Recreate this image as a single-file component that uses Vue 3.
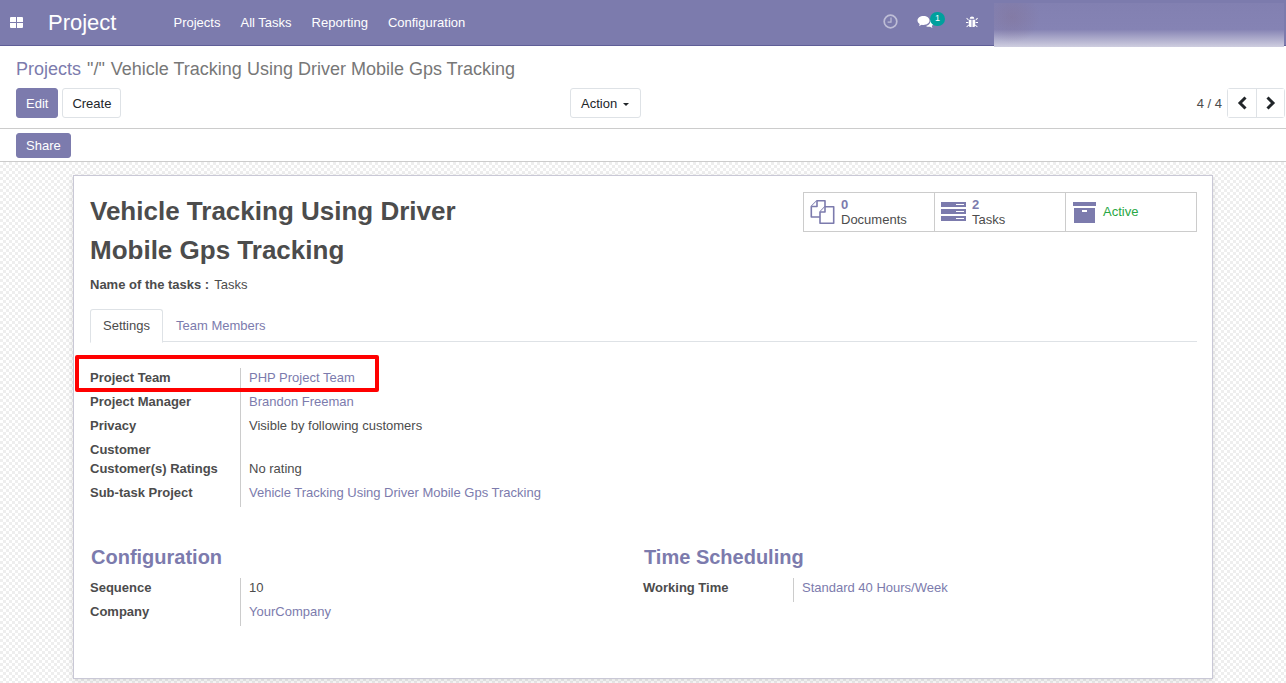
<template>
  <div class="page">
    <header class="navbar">
      <svg class="apps" width="13" height="11" viewBox="0 0 13 11"><path fill="#fff" d="M1 0h5v5H0V1a1 1 0 0 1 1-1zM7 0h5a1 1 0 0 1 1 1v4H7zM0 6h6v5H1a1 1 0 0 1-1-1zM7 6h6v4a1 1 0 0 1-1 1H7z"/></svg>
      <span class="brand">Project</span>
      <nav class="menu">
        <a v-for="item in menu" :key="item">{{ item }}</a>
      </nav>
      <div class="systray">
        <svg class="clock" width="15" height="15" viewBox="0 0 15 15"><circle cx="7.5" cy="7.5" r="6.3" fill="none" stroke="#fff" stroke-width="1.7"/><path d="M8 3.5v4.6H4.6" fill="none" stroke="#fff" stroke-width="1.2"/></svg>
        <span class="chat">
          <svg width="17" height="14" viewBox="0 0 17 14"><path fill="#fff" d="M6.5 1C3 1 .5 3 .5 5.5c0 1.500.9 2.700 2.200 3.500L2 11l2.800-1.300c.6.100 1.100.2 1.700.2 3.500 0 6-2 6-4.400S10 1 6.500 1z"/><path fill="#fff" d="M13.500 4.500c1.800.7 3 2 3 3.600 0 1.200-.7 2.200-1.700 2.900l.6 2-2.400-1.200c-1.600.2-3-.1-4.100-.9 2.700-.3 4.800-2.300 4.600-6.400z"/></svg>
          <b class="badge">1</b>
        </span>
        <svg class="bug" width="12" height="12" viewBox="0 0 13 13"><path fill="#fff" d="M4 3a2.500 2.500 0 0 1 5 0zM3 4h3v8H5a2 2 0 0 1-2-2zM7 4h3v6a2 2 0 0 1-2 2H7zM1 2l2 2-.7.7-2-2zM12 2l1 .7-2 2-.7-.7zM0 6.500h2.500v1H0zM10.500 6.500H13v1h-2.500zM2.500 9.500l.6.800L1 12.300l-.7-.7zM10.500 9.500l2.200 2.100-.7.7-2.100-2z"/></svg>
      </div>
      <div class="blurred"></div>
    </header>

    <section class="control">
      <div class="breadcrumb"><a>Projects</a><span class="sep">"/"</span>Vehicle Tracking Using Driver Mobile Gps Tracking</div>
      <div class="control-row">
        <div class="left-btns">
          <button class="btn primary">Edit</button>
          <button class="btn">Create</button>
        </div>
        <button class="btn action">Action <i class="caret"></i></button>
        <div class="pager">
          <span>4 / 4</span>
          <div class="pager-btns">
            <button><svg width="11" height="14" viewBox="0 0 11 14"><path d="M8.500 1.500 3 7l5.500 5.500" fill="none" stroke="#212529" stroke-width="3"/></svg></button>
            <button><svg width="11" height="14" viewBox="0 0 11 14"><path d="M2.500 1.500 8 7l-5.500 5.500" fill="none" stroke="#212529" stroke-width="3"/></svg></button>
          </div>
        </div>
      </div>
    </section>

    <div class="statusbar">
      <button class="btn primary share">Share</button>
    </div>

    <main class="background">
      <div class="sheet">
        <div class="head">
          <h1>Vehicle Tracking Using Driver Mobile Gps Tracking</h1>
          <div class="stats">
            <div class="stat">
              <svg width="25" height="24" viewBox="0 0 24 24" fill="#fff" stroke="#7c7bad" stroke-width="1.600" stroke-linejoin="round"><path d="M6.500.8H14.500V17H.8V6.500z"/><path d="M6.500.8V6.500H.8"/><path d="M14.500 6.800H23.200V23.200H9.500V12z"/><path d="M14.500 6.800V12H9.500"/></svg>
              <div><b>0</b><span>Documents</span></div>
            </div>
            <div class="stat">
              <svg width="25" height="20" viewBox="0 0 25 20"><path fill="#7c7bad" d="M0 0h25v5H0zM0 7h25v5H0zM0 14h25v5H0z"/><path fill="#fff" d="M15 2h8v1h-8zM15 9h8v1h-8zM15 16h8v1h-8z"/></svg>
              <div><b>2</b><span>Tasks</span></div>
            </div>
            <div class="stat archive">
              <svg width="23" height="21" viewBox="0 0 23 21"><path fill="#7c7bad" d="M0 0h23v4H0zM1 6h21v15H1z"/><path fill="#fff" d="M9 8h5v2H9z"/></svg>
              <span class="active">Active</span>
            </div>
          </div>
        </div>

        <div class="tasks-name"><b>Name of the tasks :</b><span>Tasks</span></div>

        <div class="tabs">
          <a class="tab on">Settings</a>
          <a class="tab other">Team Members</a>
        </div>

        <div class="fields first">
          <template v-for="row in settings" :key="row.label">
            <label :class="{ tight: row.tight }">{{ row.label }}</label>
            <div class="value" :class="{ link: row.link, tight: row.tight }">{{ row.value }}</div>
          </template>
          <div class="highlight"></div>
        </div>

        <div class="groups">
          <div>
            <h2>Configuration</h2>
            <div class="fields">
              <label>Sequence</label><div class="value">10</div>
              <label>Company</label><div class="value link">YourCompany</div>
            </div>
          </div>
          <div>
            <h2>Time Scheduling</h2>
            <div class="fields">
              <label>Working Time</label><div class="value link">Standard 40 Hours/Week</div>
            </div>
          </div>
        </div>
      </div>
    </main>
  </div>
</template>

<script setup>
const menu = ['Projects', 'All Tasks', 'Reporting', 'Configuration']

const settings = [
  { label: 'Project Team', value: 'PHP Project Team', link: true },
  { label: 'Project Manager', value: 'Brandon Freeman', link: true },
  { label: 'Privacy', value: 'Visible by following customers' },
  { label: 'Customer', value: '', tight: true },
  { label: 'Customer(s) Ratings', value: 'No rating' },
  { label: 'Sub-task Project', value: 'Vehicle Tracking Using Driver Mobile Gps Tracking', link: true }
]
</script>

<style>
html, body {
  margin: 0;
  height: 100%;
  overflow: hidden;
}
</style>

<style scoped>
.page {
  height: 683px;
  display: flex;
  flex-direction: column;
  font-family: "Liberation Sans", Arial, sans-serif;
  font-size: 13px;
  color: #4c4c4c;
  background: #fff;
  overflow: hidden;
}

.navbar {
  position: relative;
  height: 45px;
  flex: none;
  display: flex;
  align-items: center;
  background: #7c7bad;
  border-bottom: 1px solid #5f5e97;
  color: #fff;
}

.apps {
  margin-left: 10px;
}

.brand {
  margin-left: 25px;
  font-size: 22px;
  width: 125.500px;
}

.menu {
  display: flex;
  gap: 20px;
}

.systray {
  position: absolute;
  left: 883px;
  top: 14px;
  display: flex;
  align-items: center;
}

.clock {
  opacity: 0.5;
}

.chat {
  position: relative;
  display: flex;
  margin-left: 19px;
}

.badge {
  position: absolute;
  left: 13px;
  top: -3px;
  width: 15px;
  height: 14px;
  border-radius: 8px;
  background: #00a09d;
  font-size: 9px;
  font-weight: normal;
  line-height: 13px;
  text-align: center;
}

.bug {
  margin-left: 32px;
}

.blurred {
  position: absolute;
  left: 994px;
  top: 3px;
  width: 290px;
  height: 44px;
  background:
    radial-gradient(ellipse 28px 26px at 18px 14px, rgba(130, 110, 140, 0.35), transparent),
    linear-gradient(#8280b1 0, #8583b4 60%, #cfcee0 100%);
}

.control {
  flex: none;
  height: 82px;
  padding: 0 16px;
  border-bottom: 1px solid #ccc;
}

.breadcrumb {
  margin-top: 13px;
  font-size: 18px;
  line-height: 21px;
  color: #777;
}

.breadcrumb a {
  color: #7c7bad;
}

.sep {
  margin: 0 6px 0 6px;
}

.control-row {
  position: relative;
  display: flex;
  align-items: center;
  justify-content: space-between;
  margin-top: 8px;
}

.left-btns {
  display: flex;
  gap: 4px;
}

.btn {
  height: 30px;
  padding: 0 9px;
  border: 1px solid #dee2e6;
  border-radius: 3px;
  background: #fff;
  color: #212529;
  font: inherit;
}

.btn.primary {
  background: #7c7bad;
  border-color: #7c7bad;
  color: #fff;
}

.action {
  position: absolute;
  left: 554px;
  top: 0;
  padding: 0 11px 0 10px;
}

.caret {
  display: inline-block;
  margin-left: 2px;
  vertical-align: 2px;
  border-top: 3px solid #212529;
  border-left: 3px solid transparent;
  border-right: 3px solid transparent;
}

.pager {
  display: flex;
  align-items: center;
  gap: 5px;
  margin-right: -15px;
}

.pager-btns {
  display: flex;
  border: 1px solid #dee2e6;
  border-radius: 3px;
}

.pager-btns button {
  width: 28px;
  height: 28px;
  padding: 0;
  display: flex;
  align-items: center;
  justify-content: center;
  border: 0;
  background: #fff;
}

.pager-btns button + button {
  border-left: 1px solid #dee2e6;
}

.statusbar {
  flex: none;
  height: 33px;
  padding: 4px 16px 0;
  box-sizing: border-box;
  border-bottom: 1px solid #ccc;
}

.share {
  height: 25px;
  display: block;
}

.background {
  flex: 1;
  padding-top: 13px;
  background-color: #fff;
  background-image: repeating-conic-gradient(#eeeeee 0 25%, #fff 0 50%);
  background-size: 6px 6px;
}

.sheet {
  width: 1138px;
  height: 502px;
  margin-left: 73px;
  background: #fff;
  border: 1px solid #c9c8d6;
  box-shadow: 0 2px 6px rgba(0, 0, 0, 0.12);
  position: relative;
}

.head {
  display: flex;
  justify-content: space-between;
  padding: 16px 15px 0 16px;
}

h1 {
  width: 400px;
  margin: 0;
  font-size: 26px;
  line-height: 39px;
  font-weight: bold;
  color: #4c4c4c;
}

.stats {
  display: grid;
  grid-template-columns: 130px 131px 131px;
  width: 392px;
  height: 38px;
  border: 1px solid #ccc;
}

.stat {
  display: flex;
  align-items: center;
  gap: 6px;
  padding-left: 6px;
  box-sizing: border-box;
}

.stat + .stat {
  border-left: 1px solid #ccc;
}

.stat.archive {
  padding-left: 7px;
}

.stat b {
  display: block;
  color: #7c7bad;
  line-height: 14px;
}

.stat span {
  display: block;
  line-height: 15px;
}

.stat .active {
  color: #28a745;
  margin: 0 0 2px 1px;
}

.tasks-name {
  margin: 6px 0 0 16px;
  line-height: 18px;
}

.tasks-name span {
  margin-left: 5px;
}

.tabs {
  display: flex;
  margin: 15px 15px 0 16px;
  height: 32px;
  border-bottom: 1px solid #dee2e6;
}

.tab {
  padding: 0 12px;
  line-height: 32px;
  color: #7c7bad;
}

.tab.other {
  padding-left: 13px;
  line-height: 33px;
}

.tab.on {
  height: 32px;
  color: #4c4c4c;
  background: #fff;
  border: 1px solid #dee2e6;
  border-bottom: 1px solid #fff;
  border-radius: 3px 3px 0 0;
}

.fields {
  position: relative;
  display: grid;
  grid-template-columns: 150px 1fr;
}

.fields.first {
  margin: 26px 16px 0;
}

.fields label {
  font-weight: bold;
  height: 24px;
  line-height: 20px;
}

.fields .value {
  height: 24px;
  line-height: 20px;
  padding-left: 8px;
  border-left: 1px solid #ccc;
}

.fields label.tight,
.fields .value.tight {
  height: 19px;
}

.value.link {
  color: #7c7bad;
}

.highlight {
  position: absolute;
  left: -15px;
  top: -13px;
  width: 296px;
  height: 29px;
  border: 4px solid #f00;
  border-radius: 2px;
}

.groups {
  display: grid;
  grid-template-columns: 553px 1fr;
  margin: 37px 16px 0;
}

h2 {
  margin: 0 0 8px 1px;
  font-size: 20px;
  line-height: 26px;
  font-weight: bold;
  color: #7c7bad;
}
</style>
